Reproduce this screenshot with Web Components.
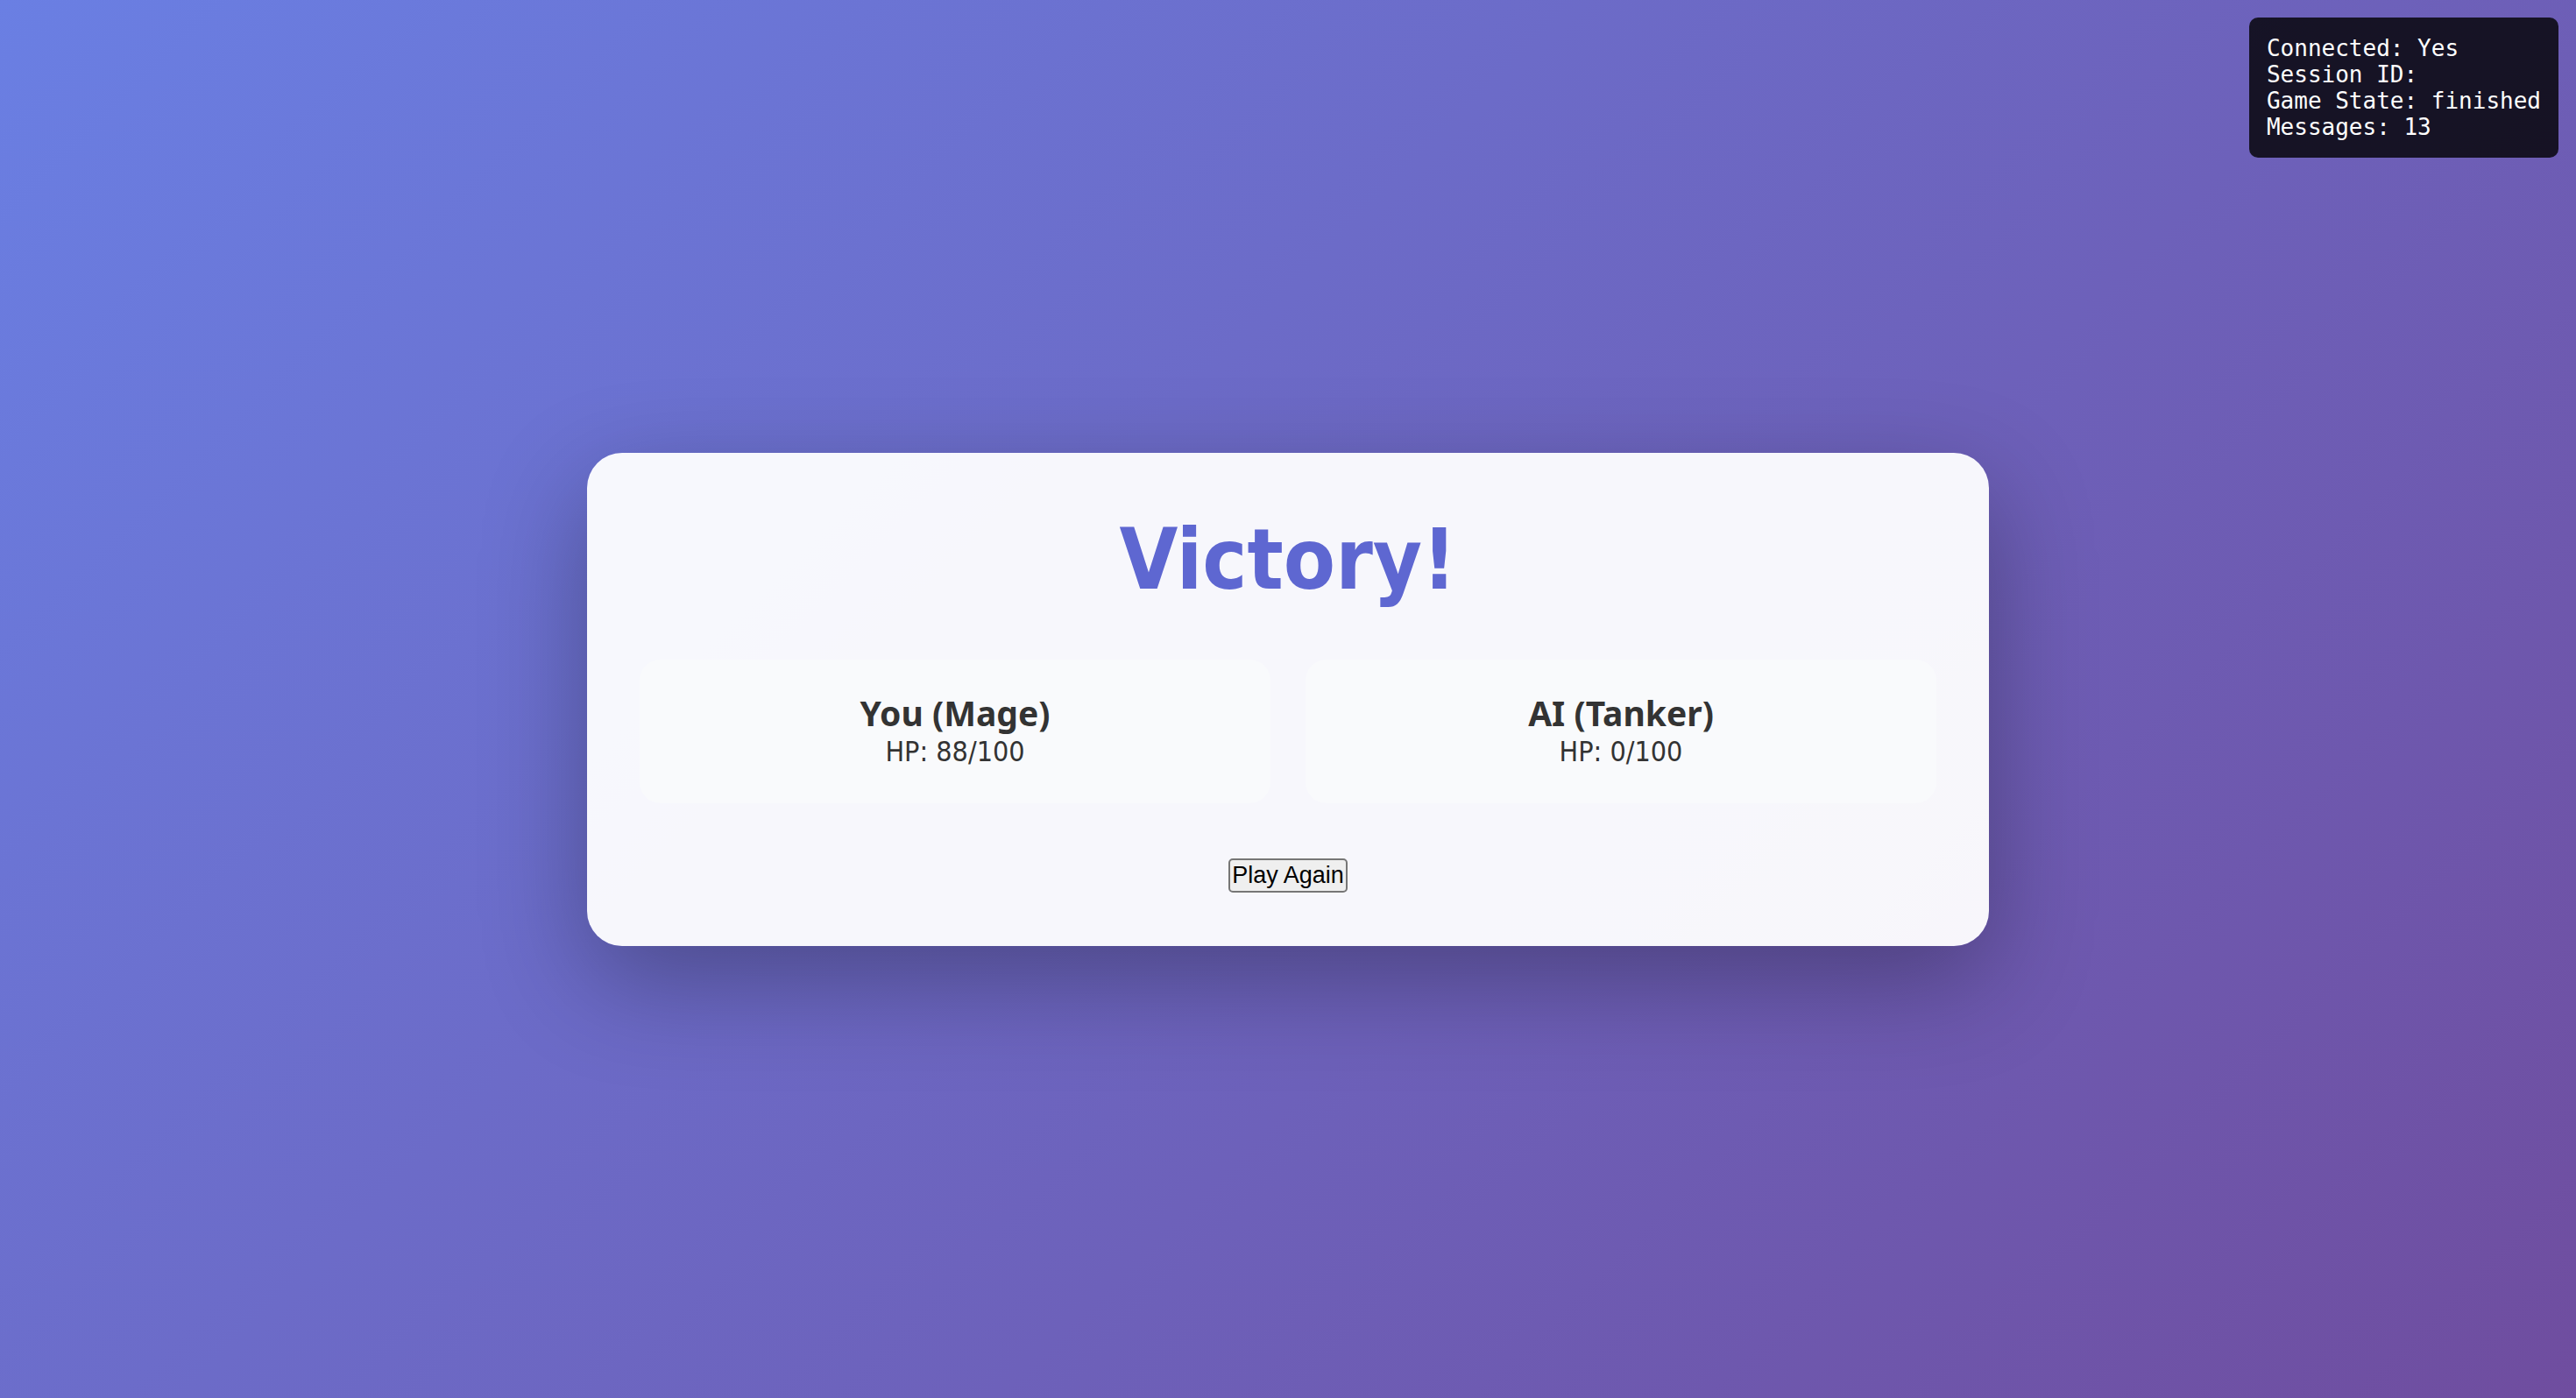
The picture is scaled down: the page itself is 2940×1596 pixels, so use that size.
<!DOCTYPE html>
<html lang="en">
<head>
<meta charset="utf-8">
<meta name="viewport" content="width=device-width, initial-scale=1">
<title>Battle Result</title>
<style>
  html { height: 100%; }
  body {
    margin: 0;
    min-height: 100%;
    display: flex;
    font-family: "DejaVu Sans Condensed", "DejaVu Sans", sans-serif;
    font-size: 32px;
    color: #333;
    background: linear-gradient(135deg, #6a7fe3 0%, #6f4d9f 100%);
  }
</style>
</head>
<body>
<battle-app></battle-app>

<script>
  const define = (name, html) => {
    const template = document.createElement('template');
    template.innerHTML = html;
    customElements.define(name, class extends HTMLElement {
      constructor() {
        super();
        this.attachShadow({ mode: 'open' }).append(template.content.cloneNode(true));
      }
    });
  };

  define('debug-panel', `
    <style>
      :host {
        display: block;
        padding: 20px;
        border-radius: 10px;
        background: rgba(0, 0, 0, 0.8);
        color: #fff;
        font-family: "DejaVu Sans Mono", monospace;
        font-size: 26px;
        line-height: 30px;
      }
    </style>
    <slot></slot>`);

  define('fighter-card', `
    <style>
      :host {
        display: flex;
        flex: 1;
        flex-direction: column;
        gap: 4px;
        padding: 40px;
        border-radius: 24px;
        background: #f9fafc;
        text-align: center;
      }
      h3 {
        margin: 0;
        font-family: "Noto Sans", sans-serif;
        font-size: 39px;
        line-height: 42px;
      }
      div { line-height: 38px; }
    </style>
    <h3><slot name="name"></slot></h3>
    <div><slot></slot></div>`);

  define('play-button', `
    <style>
      :host { display: block; }
      button {
        display: block;
        margin: 0;
        padding: 2px;
        border: 2px solid #767676;
        border-radius: 5px;
        background: #efefef;
        color: #000;
        font-family: "Liberation Sans", Arial, sans-serif;
        font-size: 27px;
        line-height: 31px;
      }
    </style>
    <button type="button"><slot></slot></button>`);

  define('result-card', `
    <style>
      :host {
        display: flex;
        flex-direction: column;
        align-items: center;
        gap: 60px;
        box-sizing: border-box;
        width: 100%;
        max-width: 1600px;
        padding: 60px;
        border-radius: 40px;
        background: rgba(255, 255, 255, 0.95);
        box-shadow: 0 40px 120px rgba(0, 0, 0, 0.3);
      }
      h1 {
        margin: 0;
        padding-top: 8px;
        color: #5e67d1;
        font-size: 96px;
        line-height: 108px;
      }
      section {
        display: flex;
        gap: 40px;
        width: 100%;
      }
      footer { padding: 3px 0 1px; }
    </style>
    <h1><slot name="title"></slot></h1>
    <section><slot></slot></section>
    <footer><slot name="action"></slot></footer>`);

  define('battle-app', `
    <style>
      :host {
        display: flex;
        flex: 1;
        align-items: center;
        justify-content: center;
        box-sizing: border-box;
        padding: 40px;
      }
      debug-panel {
        position: absolute;
        top: 20px;
        right: 20px;
      }
    </style>
    <result-card>
      <span slot="title">Victory!</span>
      <fighter-card><span slot="name">You (Mage)</span>HP: 88/100</fighter-card>
      <fighter-card><span slot="name">AI (Tanker)</span>HP: 0/100</fighter-card>
      <play-button slot="action">Play Again</play-button>
    </result-card>
    <debug-panel>
      <div>Connected: Yes</div>
      <div>Session ID:</div>
      <div>Game State: finished</div>
      <div>Messages: 13</div>
    </debug-panel>`);
</script>
</body>
</html>
